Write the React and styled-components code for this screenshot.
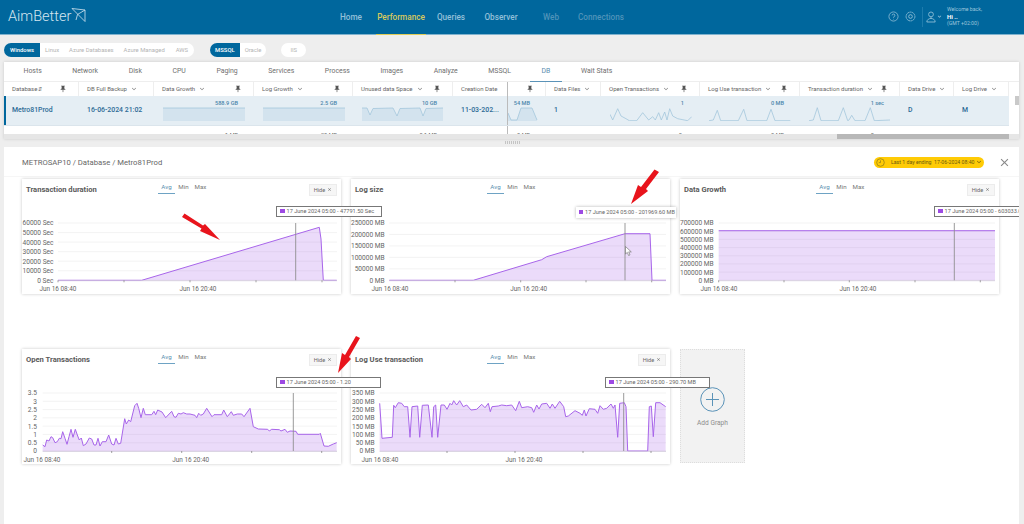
import React from "react";
import styled, { createGlobalStyle } from "styled-components";
import { MdPushPin, MdKeyboardArrowDown, MdClose } from "react-icons/md";

const GlobalStyle = createGlobalStyle`
  html, body {
    margin: 0;
    padding: 0;
    height: 524px;
    overflow: hidden;
    background: #eeeeee;
    font-family: Roboto, "Liberation Sans", sans-serif;
  }
  * { box-sizing: border-box; }
`;

const Page = styled.div`
  width: 1024px;
  height: 524px;
  display: flex;
  flex-direction: column;
  overflow: hidden;
`;

/* top bar */
const Header = styled.header`
  height: 34.5px;
  flex: none;
  background: #00679d;
  border-bottom: 1px solid #7fb2ce;
  display: flex;
  align-items: stretch;
  color: #fff;
`;

const Logo = styled.div`
  width: 326px;
  display: flex;
  align-items: center;
  padding-left: 8px;
  font-size: 14.5px;
  font-weight: 300;
  color: #d5e6f0;
  svg { margin: -2px 0 0 0; }
`;

const Nav = styled.nav`
  display: flex;
`;

const NavItem = styled.a`
  width: 50px;
  display: flex;
  align-items: center;
  justify-content: center;
  font-size: 8.2px;
  font-weight: 500;
  white-space: nowrap;
  color: ${(p) => (p.$active ? "#d8c95e" : p.$dim ? "#4f93b9" : "#93c0d9")};
  border-bottom: 1px solid ${(p) => (p.$active ? "#e0cd58" : "transparent")};
  margin-bottom: -1px;
`;

const HeaderRight = styled.div`
  margin-left: auto;
  width: 136px;
  display: flex;
  align-items: center;
  color: #9cc6dc;
`;

const HeaderIcon = styled.svg`
  width: 11px;
  height: 11px;
  margin-right: 6px;
`;

const Divider = styled.div`
  width: 1px;
  height: 20px;
  background: #1d7cad;
  margin: 0 3px 0 0;
`;

const Welcome = styled.div`
  margin-left: 4px;
  font-size: 5.2px;
  line-height: 7px;
  color: #9cc6dc;
  b { display: block; color: #fff; font-size: 6px; font-weight: 700; }
`;

/* filter pills */
const FilterBar = styled.div`
  height: 27px;
  flex: none;
  display: flex;
  align-items: center;
  padding: 3px 0 0 4px;
`;

const PillGroup = styled.div`
  height: 14px;
  display: flex;
  align-items: center;
  background: #fff;
  border-radius: 7px;
  margin-right: ${(p) => p.$gap || 0}px;
  overflow: hidden;
`;

const Pill = styled.span`
  height: 14px;
  display: flex;
  align-items: center;
  justify-content: center;
  padding: 0 ${(p) => p.$pad ?? 5}px;
  font-size: 5.9px;
  white-space: nowrap;
  font-weight: ${(p) => (p.$active ? 500 : 400)};
  color: ${(p) => (p.$active ? "#fff" : "#b4b4b4")};
  background: ${(p) => (p.$active ? "#00679d" : "transparent")};
`;

/* grid panel */
const Panel = styled.section`
  margin-left: 4px;
  width: 1015px;
  flex: none;
  background: #fff;
  box-shadow: 0 0 3px rgba(0, 0, 0, 0.15);
`;

const Tabs = styled.div`
  height: 20px;
  display: flex;
  padding-left: 4.2px;
  border-bottom: 1px solid #eeeeee;
`;

const Tab = styled.div`
  margin: 0 3.3px;
  padding: 0 12px;
  height: 20px;
  display: flex;
  align-items: center;
  font-size: 6.9px;
  white-space: nowrap;
  color: ${(p) => (p.$active ? "#5b8fb0" : "#6f6f6f")};
  border-bottom: 1px solid ${(p) => (p.$active ? "#5b93b8" : "transparent")};
`;

const Body = styled.div`
  position: relative;
`;

const Row = styled.div`
  display: grid;
  grid-template-columns: 75px 75px 100px 99px 100px 55px 38px 55px 99px 100px 100px 54px 55px;
  width: 1005px;
  height: ${(p) => p.$h}px;
  overflow: hidden;
  background: ${(p) => (p.$selected ? "#e5eef4" : "#fff")};
  border-bottom: ${(p) => (p.$selected ? "1px solid #dbe5ec" : "none")};
  box-shadow: ${(p) => (p.$selected ? "inset 2px 0 0 #00679d" : "none")};
`;

const HeadCell = styled.div`
  display: flex;
  align-items: center;
  padding: 0 8px;
  font-size: 6px;
  color: #666;
  white-space: nowrap;
  border-right: 1px solid ${(p) => (p.$freeze ? "#bbbbbb" : "#eeeeee")};
  svg { flex: none; }
`;

const SortMark = styled.span`
  font-size: 5px;
  margin-left: 1px;
`;

const Pin = styled(MdPushPin)`
  margin-left: auto;
  margin-right: 3px;
  color: #555;
  font-size: 8px;
`;

const Chev = styled(MdKeyboardArrowDown)`
  margin-left: 3px;
  color: #777;
  font-size: 8px;
`;

const TextCell = styled.div`
  display: flex;
  align-items: center;
  padding-left: 8px;
  font-size: 6.9px;
  font-weight: 500;
  color: #2b6a94;
  white-space: nowrap;
  overflow: hidden;
  border-right: ${(p) => (p.$freeze ? "1px solid #bbbbbb" : "none")};
`;

const SparkCell = styled.div`
  position: relative;
  padding: 4px 0 0 ${(p) => p.$pad ?? 9}px;
  overflow: hidden;
  svg { display: block; }
`;

const SparkValue = styled.div`
  height: 7px;
  font-size: 5.6px;
  line-height: 7px;
  text-align: right;
  padding-right: ${(p) => p.$right ?? 16}px;
  font-weight: 500;
  color: #4b86ab;
  white-space: nowrap;
`;

const CutCell = styled.div`
  padding: 6px ${(p) => p.$right ?? 16}px 0 0;
  text-align: right;
  font-size: 5.6px;
  color: #666;
  white-space: nowrap;
  border-right: ${(p) => (p.$freeze ? "1px solid #bbbbbb" : "none")};
`;

const VThumb = styled.div`
  position: absolute;
  left: 1010.5px;
  top: 14px;
  width: 4px;
  height: 9px;
  background: #c9c9c9;
`;

const HTrack = styled.div`
  height: 5px;
  background: #e6e6e6;
  display: flex;
  justify-content: flex-end;
  padding-right: 10px;
`;

const HThumb = styled.div`
  width: 172px;
  height: 5px;
  background: #b8b8b8;
`;

const Splitter = styled.div`
  height: 8px;
  flex: none;
  display: flex;
  align-items: center;
  justify-content: center;
  gap: 1px;
  span { width: 1px; height: 3px; background: #c4c4c4; }
`;

/* detail area */
const Detail = styled.section`
  position: relative;
  margin-left: 4px;
  width: 1015px;
  flex: 1;
  background: #fff;
  overflow: hidden;
`;

const DetailHead = styled.div`
  height: 30px;
  margin-bottom: 2px;
  display: flex;
  align-items: center;
  padding: 2px 8px 0 18px;
  border-bottom: 1px solid #f6f6f6;
`;

const Crumb = styled.div`
  font-size: 7.7px;
  color: #666;
`;

const DatePill = styled.div`
  margin-left: auto;
  margin-right: 14px;
  width: 110px;
  height: 11px;
  border-radius: 6px;
  background: #ffcb05;
  display: flex;
  align-items: center;
  padding-left: 2px;
  font-size: 5.2px;
  color: #6b5a10;
  white-space: nowrap;
  svg { flex: none; }
  span { margin-left: 6px; margin-right: 1px; }
`;

const CloseBtn = styled(MdClose)`
  font-size: 13px;
  color: #888;
`;

const CardGrid = styled.div`
  display: grid;
  grid-template-columns: 319px 319px 319px;
  grid-auto-rows: 115.5px;
  column-gap: 10px;
  row-gap: 54.5px;
  padding-left: 18px;
`;

const Card = styled.div`
  position: relative;
  background: #fff;
  box-shadow: 0 0 3px rgba(0, 0, 0, 0.22);
  svg.plot { display: block; overflow: visible; }
`;

const CardHead = styled.div`
  height: 20px;
  display: grid;
  grid-template-columns: 132px 1fr auto;
  align-items: center;
  padding: 2px 4px 0;
`;

const CardTitle = styled.div`
  font-size: 7.6px;
  font-weight: 700;
  color: #5a5a5a;
  white-space: nowrap;
`;

const Modes = styled.div`
  display: flex;
  margin-top: -3px;
`;

const Mode = styled.div`
  width: 17px;
  text-align: center;
  font-size: 6.2px;
  padding-bottom: 2px;
  color: ${(p) => (p.$active ? "#5b8fb0" : "#777")};
  border-bottom: 1px solid ${(p) => (p.$active ? "#6ea3c4" : "transparent")};
`;

const HideBtn = styled.div`
  width: 28px;
  height: 12px;
  display: flex;
  align-items: center;
  justify-content: center;
  gap: 2px;
  font-size: 5.6px;
  color: #666;
  background: #f6f6f6;
  border: 1px solid #ececec;
`;

const Tip = styled.div`
  position: absolute;
  left: ${(p) => p.$left}px;
  top: ${(p) => p.$top}px;
  width: ${(p) => p.$width}px;
  height: 11px;
  z-index: 3;
  display: flex;
  align-items: center;
  padding-left: 3px;
  gap: 2px;
  font-size: 5.6px;
  color: #666;
  white-space: nowrap;
  background: #fff;
  border: ${(p) => (p.$plain ? "none" : "1px solid #777")};
  box-shadow: ${(p) => (p.$plain ? "0 0 3px rgba(0,0,0,.3)" : "none")};
  &::before {
    content: "";
    width: 4.5px;
    height: 4.5px;
    flex: none;
    background: #9d4ae3;
  }
`;

const Cursor = styled.svg`
  position: absolute;
  left: 274px;
  top: 67px;
  width: 7px;
  height: 10px;
  z-index: 2;
`;

const AddGraph = styled.div`
  width: 65px;
  height: 114px;
  background: #f2f2f2;
  border: 1px dotted #dddddd;
  display: flex;
  flex-direction: column;
  align-items: center;
  padding-top: 37px;
  font-size: 6.6px;
  color: #8d8d8d;
  gap: 7px;
`;

const ArrowLayer = styled.svg`
  position: absolute;
  left: 0;
  top: 0;
  width: 1015px;
  height: 377px;
  pointer-events: none;
  z-index: 5;
`;

const fromZoom = (pts, ox, oy) =>
  pts.map(([x, y]) => [(x - ox) / 3, (y - oy) / 3]);

const toLine = (pts) => pts.map(([x, y]) => `${x.toFixed(1)},${y.toFixed(1)}`).join(" ");

const Spark = ({ pts, width = 82, fill = "#d3e3ee", stroke = "#a3c6dc" }) => {
  const area = `0,14 ${toLine(pts)} ${pts[pts.length - 1][0]},14`;
  return (
    <svg width={width} height="14" viewBox={`0 0 ${width} 14`}>
      <polygon points={area} fill={fill} />
      <polyline points={toLine(pts)} fill="none" stroke={stroke} strokeWidth="0.8" />
    </svg>
  );
};

const Chart = ({ labels, yEnd, left, right = 315, base, top, pts, marker, ticks, xLabels }) => {
  const step = (base - top) / (labels.length - 1);
  const first = pts[0][0];
  const last = pts[pts.length - 1][0];
  return (
    <svg className="plot" width="319" height="95.5" viewBox="0 20 319 95.5">
      {labels.map((l, i) => {
        const y = base - i * step;
        return (
          <g key={l}>
            <line x1={left} x2={right} y1={y} y2={y} stroke="#f0f0f0" strokeWidth="0.8" />
            <text x={yEnd} y={y + 2.4} textAnchor="end" fontSize="6.6" fill="#666">{l}</text>
          </g>
        );
      })}
      <polygon points={`${first},${base} ${toLine(pts)} ${last},${base}`} fill="#a45ce6" fillOpacity="0.22" />
      <polyline points={toLine(pts)} fill="none" stroke="#a865ea" strokeWidth="1" strokeLinejoin="round" />
      <line x1={left} x2={right} y1={base + 0.4} y2={base + 0.4} stroke="#cfc6da" strokeWidth="0.8" />
      {ticks.map((t) => (
        <line key={t} x1={t} x2={t} y1={base} y2={base + 2} stroke="#888" strokeWidth="0.8" />
      ))}
      <line x1={marker} x2={marker} y1={top} y2={base} stroke="#8f8f8f" strokeWidth="0.9" />
      {xLabels.map(([x, t]) => (
        <text key={t} x={x} y={base + 10.5} textAnchor="middle" fontSize="6.4" fill="#666">{t}</text>
      ))}
    </svg>
  );
};

const GraphCard = ({ title, tip, tipPlain, tipLeft, tipTop, tipWidth, hideBtn = true, children, extra }) => (
  <Card>
    <CardHead>
      <CardTitle>{title}</CardTitle>
      <Modes>
        <Mode $active>Avg</Mode>
        <Mode>Min</Mode>
        <Mode>Max</Mode>
      </Modes>
      {hideBtn ? (
        <HideBtn>Hide <MdClose size={5} /></HideBtn>
      ) : (
        <span />
      )}
    </CardHead>
    {children}
    <Tip $left={tipLeft} $top={tipTop} $width={tipWidth} $plain={tipPlain}>{tip}</Tip>
    {extra}
  </Card>
);

const tabs = ["Hosts", "Network", "Disk", "CPU", "Paging", "Services", "Process", "Images", "Analyze", "MSSQL", "DB", "Wait Stats"];

const heads = [
  { label: "Database", sort: true, pin: true },
  { label: "DB Full Backup", chev: true },
  { label: "Data Growth", chev: true, pin: true },
  { label: "Log Growth", chev: true, pin: true },
  { label: "Unused data Space", chev: true, pin: true },
  { label: "Creation Date", freeze: true },
  { label: "", pin: true },
  { label: "Data Files", chev: true },
  { label: "Open Transactions", chev: true, pin: true },
  { label: "Log Use transaction", chev: true, pin: true },
  { label: "Transaction duration", chev: true, pin: true },
  { label: "Data Drive", chev: true },
  { label: "Log Drive", chev: true },
];

const flat = [[0, 1], [82, 1]];
const unused = [[0, 1], [5, 1], [8, 8], [11, 1.5], [31, 1], [35, 9], [38, 1.5], [58, 1], [61, 9], [64, 1.5], [81, 1]];
const sizeSpark = [[0, 6], [3, 13], [9, 13], [13, 1], [24, 1], [29, 13]];
const openSpark = fromZoom([[292, 345], [300, 362], [315, 328], [325, 350], [340, 358], [350, 364], [372, 364], [390, 340], [408, 362], [420, 352], [428, 362], [438, 340], [446, 362], [456, 338], [463, 362], [471, 328], [480, 350], [495, 358], [525, 364], [537, 352]], 292, 323);
const logSpark = fromZoom([[592, 364], [605, 362], [617, 333], [627, 364], [680, 364], [696, 330], [706, 364], [765, 364], [778, 330], [790, 364], [836, 364]], 592, 323);
const durSpark = fromZoom([[892, 364], [905, 362], [917, 325], [928, 364], [980, 364], [995, 325], [1008, 364], [1012, 362], [1020, 348], [1030, 364], [1060, 364], [1076, 325], [1088, 364], [1135, 362]], 892, 323);

const openPts = [[128,315],[135,320],[140,300],[147,303],[153,290],[158,293],[165,308],[172,305],[178,295],[183,296],[188,275],[195,295],[201,313],[207,290],[213,268],[219,292],[226,268],[233,288],[238,300],[244,294],[250,317],[258,312],[268,294],[275,297],[282,315],[288,315],[294,295],[300,318],[307,305],[318,305],[326,285],[335,312],[342,315],[348,295],[355,312],[362,310],[374,236],[379,252],[386,240],[392,245],[404,197],[411,190],[416,205],[423,233],[430,205],[436,224],[455,224],[462,214],[467,224],[473,210],[486,216],[497,233],[515,214],[522,230],[528,232],[535,220],[543,222],[550,218],[560,222],[570,222],[585,226],[590,233],[596,220],[602,226],[610,222],[620,205],[636,230],[642,224],[665,224],[671,210],[682,230],[694,215],[700,226],[712,222],[725,222],[732,230],[750,205],[760,260],[775,267],[803,268],[808,273],[815,268],[838,269],[843,273],[855,268],[862,277],[870,273],[888,274],[893,283],[958,283],[961,280],[972,318],[985,319],[1000,312],[1010,308]]
  .map(([x, y]) => [x / 3 - 22, y / 3 - 9]);

const logPts = [[104,190],[111,295],[142,292],[146,196],[151,203],[160,188],[170,190],[178,200],[188,200],[195,292],[201,200],[218,198],[224,292],[232,196],[250,195],[261,292],[266,200],[272,195],[278,292],[288,195],[298,195],[306,208],[315,190],[320,195],[326,182],[335,195],[344,182],[355,200],[365,195],[378,210],[395,208],[410,193],[420,203],[430,190],[436,215],[441,200],[460,198],[470,195],[485,197],[500,195],[512,212],[523,184],[530,203],[548,200],[560,203],[566,217],[575,195],[582,207],[590,192],[605,190],[615,205],[622,192],[630,205],[644,184],[656,200],[662,230],[670,228],[690,212],[705,220],[712,226],[718,210],[723,228],[733,206],[750,208],[758,220],[765,197],[775,208],[785,205],[798,192],[805,205],[810,195],[818,292],[824,190],[838,188],[843,200],[848,333],[908,333],[913,200],[919,198],[925,290],[932,188],[945,188],[962,200]]
  .map(([x, y]) => [x / 3 - 6, y / 3 - 9]);

const App = () => (
  <Page>
    <GlobalStyle />
    <Header>
      <Logo>
        AimBetter
        <svg width="15" height="15" viewBox="0 0 15 15" fill="none" stroke="#d5e6f0" strokeWidth="0.8">
          <path d="M1 0.5 L14 2 V13.5 L1 0.5 M14 2 L6.5 6.5 M6.5 6.5 L5 12" />
        </svg>
      </Logo>
      <Nav>
        <NavItem>Home</NavItem>
        <NavItem $active>Performance</NavItem>
        <NavItem>Queries</NavItem>
        <NavItem>Observer</NavItem>
        <NavItem $dim>Web</NavItem>
        <NavItem $dim>Connections</NavItem>
      </Nav>
      <HeaderRight>
        <HeaderIcon viewBox="0 0 12 12" fill="none" stroke="currentColor" strokeWidth="0.8">
          <circle cx="6" cy="6" r="5" />
          <path d="M4.5 4.8 A1.5 1.5 0 1 1 6.3 6.3 L6 7.3 M6 8.6 L6 9.2" />
        </HeaderIcon>
        <HeaderIcon viewBox="0 0 12 12" fill="none" stroke="currentColor" strokeWidth="0.9">
          <circle cx="6" cy="6" r="4.8" strokeDasharray="2.2 0.4" />
          <circle cx="6" cy="6" r="2" />
        </HeaderIcon>
        <Divider />
        <svg width="10" height="12" viewBox="0 0 10 12" fill="none" stroke="currentColor" strokeWidth="0.8">
          <circle cx="5" cy="3.4" r="2.4" />
          <path d="M5 6 V7.4 C3 7.6 1 8.4 0.8 11 H9.2 C9 8.4 7 7.6 5 7.4" />
        </svg>
        <MdKeyboardArrowDown size={7} />
        <Welcome>
          Welcome back,
          <b>Hi ..</b>
          (GMT +02:00)
        </Welcome>
      </HeaderRight>
    </Header>

    <FilterBar>
      <PillGroup $gap={16}>
        <Pill $active $pad={6}>Windows</Pill>
        <Pill>Linux</Pill>
        <Pill>Azure Databases</Pill>
        <Pill>Azure Managed</Pill>
        <Pill $pad={6}>AWS</Pill>
      </PillGroup>
      <PillGroup $gap={15}>
        <Pill $active>MSSQL</Pill>
        <Pill>Oracle</Pill>
      </PillGroup>
      <PillGroup>
        <Pill $pad={9}>IIS</Pill>
      </PillGroup>
    </FilterBar>

    <Panel>
      <Tabs>
        {tabs.map((t) => (
          <Tab key={t} $active={t === "DB"}>{t}</Tab>
        ))}
      </Tabs>
      <Body>
        <Row $h={14}>
          {heads.map((h, i) => (
            <HeadCell key={i} $freeze={h.freeze}>
              {h.label}
              {h.sort && <SortMark>⇵</SortMark>}
              {h.chev && <Chev />}
              {h.pin && <Pin />}
            </HeadCell>
          ))}
        </Row>
        <Row $selected $h={30}>
          <TextCell>Metro81Prod</TextCell>
          <TextCell>16-06-2024 21:02</TextCell>
          <SparkCell><SparkValue>588.9 GB</SparkValue><Spark pts={flat} /></SparkCell>
          <SparkCell><SparkValue>2.5 GB</SparkValue><Spark pts={flat} /></SparkCell>
          <SparkCell><SparkValue>10 GB</SparkValue><Spark pts={unused} /></SparkCell>
          <TextCell $freeze>11-03-202...</TextCell>
          <SparkCell $pad={0}><SparkValue $right={16}>54 MB</SparkValue><Spark pts={sizeSpark} width={30} /></SparkCell>
          <TextCell>1</TextCell>
          <SparkCell><SparkValue>1</SparkValue><Spark pts={openSpark} fill="#e5eef4" /></SparkCell>
          <SparkCell><SparkValue>0 MB</SparkValue><Spark pts={logSpark} fill="#e5eef4" /></SparkCell>
          <SparkCell><SparkValue>1 sec</SparkValue><Spark pts={durSpark} fill="#e5eef4" /></SparkCell>
          <TextCell>D</TextCell>
          <TextCell>M</TextCell>
        </Row>
        <Row $h={8}>
          <CutCell />
          <CutCell />
          <CutCell>1 MB</CutCell>
          <CutCell>20 MB</CutCell>
          <CutCell>0.1 MB</CutCell>
          <CutCell $freeze />
          <CutCell>0 MB</CutCell>
          <CutCell />
          <CutCell $right={18}>0</CutCell>
          <CutCell>0 MB</CutCell>
          <CutCell>0 sec</CutCell>
          <CutCell />
          <CutCell />
        </Row>
        <VThumb />
      </Body>
      <HTrack><HThumb /></HTrack>
    </Panel>

    <Splitter>
      <span /><span /><span /><span /><span /><span /><span /><span />
    </Splitter>

    <Detail>
      <DetailHead>
        <Crumb>METROSAP10 / Database / Metro81Prod</Crumb>
        <DatePill>
          <svg width="9" height="9" viewBox="0 0 9 9" fill="none" stroke="#8a7a1a" strokeWidth="0.7">
            <circle cx="4.5" cy="4.5" r="3.8" />
            <path d="M4.5 2.4 V4.6 H2.8" />
          </svg>
          <span>Last 1 day ending&nbsp; 17-06-2024 08:40</span>
          <MdKeyboardArrowDown size={8} />
        </DatePill>
        <CloseBtn />
      </DetailHead>

      <CardGrid>
        <GraphCard
          title="Transaction duration"
          tip="17 June 2024 05:00 - 47791.50 Sec"
          tipLeft={254}
          tipTop={27}
          tipWidth={106}
        >
          <Chart
            labels={["0 Sec", "10000 Sec", "20000 Sec", "30000 Sec", "40000 Sec", "50000 Sec", "60000 Sec"]}
            yEnd={31.5}
            left={36}
            base={101.3}
            top={44}
            pts={[[36, 101.3], [119.7, 101.3], [297.3, 48.3], [299, 60], [301.3, 101.3], [314.7, 101.3]]}
            marker={273.7}
            ticks={[36, 102, 168, 234, 300]}
            xLabels={[[36, "Jun 16 08:40"], [176, "Jun 16 20:40"]]}
          />
        </GraphCard>

        <GraphCard
          title="Log size"
          hideBtn={false}
          tip="17 June 2024 05:00 - 201969.60 MB"
          tipPlain
          tipLeft={224.5}
          tipTop={28}
          tipWidth={100}
          extra={
            <Cursor viewBox="0 0 7 10">
              <path d="M0.5 0.5 L0.5 8 L2.3 6.4 L3.6 9.5 L5 8.9 L3.7 5.9 L6.3 5.9 Z" fill="#fff" stroke="#666" strokeWidth="0.6" />
            </Cursor>
          }
        >
          <Chart
            labels={["0 MB", "50000 MB", "100000 MB", "150000 MB", "200000 MB", "250000 MB"]}
            yEnd={33.7}
            left={38.3}
            base={101.3}
            top={44}
            pts={[[38.3, 101.3], [122.3, 101.3], [190.7, 80.7], [195.7, 77.7], [274, 54.7], [299, 54.7], [301, 101.3], [315, 101.3]]}
            marker={274}
            ticks={[104, 169.7, 235, 300.7]}
            xLabels={[[39, "Jun 16 08:40"], [177.7, "Jun 16 20:40"]]}
          />
        </GraphCard>

        <GraphCard
          title="Data Growth"
          tip="17 June 2024 05:00 - 603033.00 MB"
          tipLeft={254}
          tipTop={27}
          tipWidth={106}
        >
          <Chart
            labels={["0 MB", "100000 MB", "200000 MB", "300000 MB", "400000 MB", "500000 MB", "600000 MB", "700000 MB"]}
            yEnd={33.7}
            left={38.7}
            base={101.3}
            top={44}
            pts={[[38.7, 51.7], [315, 51.7]]}
            marker={274.3}
            ticks={[38.7, 104, 169.3, 235, 300.3]}
            xLabels={[[39, "Jun 16 08:40"], [178, "Jun 16 20:40"]]}
          />
        </GraphCard>

        <GraphCard
          title="Open Transactions"
          tip="17 June 2024 05:00 - 1.20"
          tipLeft={254}
          tipTop={28}
          tipWidth={105}
        >
          <Chart
            labels={["0", "0.5", "1", "1.5", "2", "2.5", "3", "3.5"]}
            yEnd={15}
            left={20.7}
            base={102}
            top={44}
            pts={openPts}
            marker={271.3}
            ticks={[89.7, 159.7, 229.7, 299.7]}
            xLabels={[[20, "Jun 16 08:40"], [168.7, "Jun 16 20:40"]]}
          />
        </GraphCard>

        <GraphCard
          title="Log Use transaction"
          tip="17 June 2024 05:00 - 290.70 MB"
          tipLeft={254}
          tipTop={28}
          tipWidth={105}
        >
          <Chart
            labels={["0 MB", "50 MB", "100 MB", "150 MB", "200 MB", "250 MB", "300 MB", "350 MB"]}
            yEnd={23.7}
            left={28.7}
            base={102}
            top={44}
            pts={logPts}
            marker={272.7}
            ticks={[96, 164, 232, 300]}
            xLabels={[[29, "Jun 16 08:40"], [173, "Jun 16 20:40"]]}
          />
        </GraphCard>

        <AddGraph>
          <svg width="25" height="25" viewBox="0 0 25 25" fill="none" stroke="#5b93b8" strokeWidth="1">
            <circle cx="12.5" cy="12.5" r="11.8" />
            <path d="M6 12.5 H19 M12.5 6 V19" />
          </svg>
          Add Graph
        </AddGraph>
      </CardGrid>

      <ArrowLayer viewBox="0 0 1015 377">
        <polygon points="178,70 180.5,66.5 199,78.5 201,77 216,93 196,84 197.5,81.5" fill="#e8141c" />
        <polygon points="650.5,22.5 655,25 642,42 644,44 627,57 634,38 637,40" fill="#e8141c" />
        <polygon points="352,189 356,191 345,210 347,212 334,226 338,206 341,208" fill="#e8141c" />
      </ArrowLayer>
    </Detail>
  </Page>
);

export default App;
